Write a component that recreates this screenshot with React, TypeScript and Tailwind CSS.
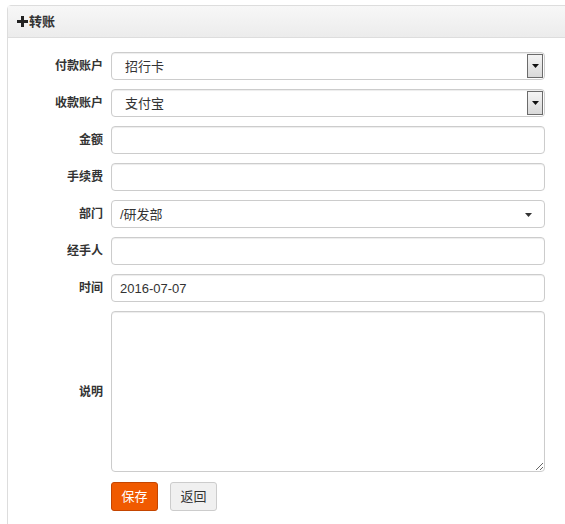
import React from "react";

const font = { fontFamily: '"Liberation Sans", "Noto Sans CJK SC", sans-serif' };

function NativeSelect({ value }: { value: string }) {
  return (
    <div className="relative h-[28px] w-[434px] rounded-[4px] border border-[#cccccc] bg-white shadow-[inset_0_1px_1px_rgba(0,0,0,0.075)]">
      <span className="absolute left-[13px] top-[4px] text-[13px] text-[#333]">{value}</span>
      <div className="absolute right-[1px] top-[1px] flex h-[24px] w-[16px] items-center justify-center border border-[#6b6b6b] bg-gradient-to-b from-[#f4f4f4] to-[#d9d9d9]">
        <svg width="7" height="4" viewBox="0 0 7 4">
          <path d="M0 0h7L3.5 4z" fill="#111" />
        </svg>
      </div>
    </div>
  );
}

function Input({ value }: { value?: string }) {
  return (
    <div className="relative h-[28px] w-[434px] rounded-[4px] border border-[#cccccc] bg-white shadow-[inset_0_1px_1px_rgba(0,0,0,0.075)]">
      {value ? <span className="absolute left-[8px] top-[4px] text-[13px] text-[#333]">{value}</span> : null}
    </div>
  );
}

function Row({ label, children }: { label: string; children: React.ReactNode }) {
  return (
    <div className="flex items-center">
      <div className="w-[95px] text-right text-[12px] font-bold text-[#333]">{label}</div>
      <div className="ml-[8px]">{children}</div>
    </div>
  );
}

export default function App() {
  return (
    <div className="h-[524px] w-[565px] overflow-hidden bg-white" style={font}>
      <div className="ml-[7px] mt-[5px] h-[600px] w-[600px] rounded-tl-[4px] border border-[#dddddd]">
        <div className="flex h-[32px] items-center border-b border-[#dddddd] bg-gradient-to-b from-[#f7f7f7] to-[#ececec] pl-[9px] text-[13px] font-bold text-[#333]">
          <svg width="11" height="11" viewBox="0 0 11 11" className="mr-[1px]">
            <path d="M4 0h3v4h4v3H7v4H4V7H0V4h4z" fill="#222" />
          </svg>
          <span>转账</span>
        </div>
        <div className="flex flex-col gap-[9px] pt-[14px]">
          <Row label="付款账户">
            <NativeSelect value="招行卡" />
          </Row>
          <Row label="收款账户">
            <NativeSelect value="支付宝" />
          </Row>
          <Row label="金额">
            <Input />
          </Row>
          <Row label="手续费">
            <Input />
          </Row>
          <Row label="部门">
            <div className="relative h-[28px] w-[434px] rounded-[4px] border border-[#cccccc] bg-white">
              <span className="absolute left-[8px] top-[4px] text-[13px] text-[#333]">/研发部</span>
              <svg width="7" height="4" viewBox="0 0 7 4" className="absolute right-[12px] top-[12px]">
                <path d="M0 0h7L3.5 4z" fill="#333" />
              </svg>
            </div>
          </Row>
          <Row label="经手人">
            <Input />
          </Row>
          <Row label="时间">
            <Input value="2016-07-07" />
          </Row>
          <Row label="说明">
            <textarea className="block h-[161px] w-[434px] rounded-[4px] border border-[#cccccc] bg-white shadow-[inset_0_1px_1px_rgba(0,0,0,0.075)] outline-none" />
          </Row>
          <div className="flex gap-[12px] pl-[103px] pt-[1px]">
            <button className="h-[29px] w-[47px] rounded-[3px] border border-[#c44500] bg-[#f05a00] text-[13px] text-white">保存</button>
            <button className="h-[29px] w-[47px] rounded-[3px] border border-[#cccccc] bg-[#f0f0f0] text-[13px] text-[#333]">返回</button>
          </div>
        </div>
      </div>
    </div>
  );
}
